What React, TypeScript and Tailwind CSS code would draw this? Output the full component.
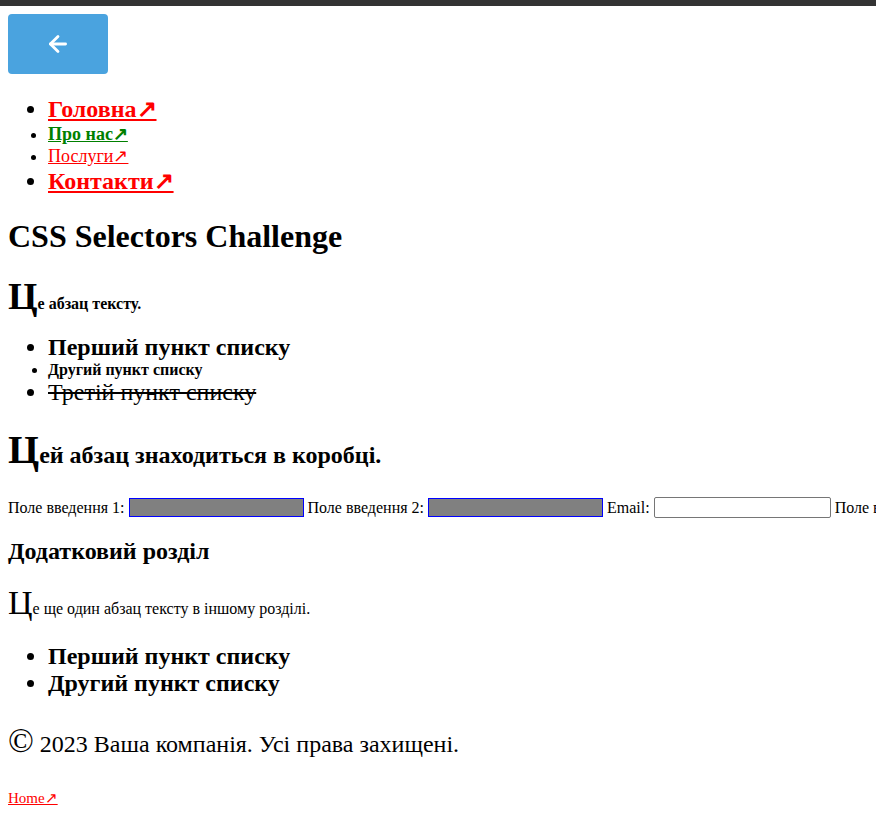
import { ArrowLeft } from "lucide-react";

export default function App() {
  return (
    <div className="min-h-screen bg-white text-black font-['Liberation_Serif','Times_New_Roman',serif] text-[16px] leading-[normal]">
      {/* top strip */}
      <div className="h-[6px] bg-[#333333]" />

      <div className="px-2 pt-2 overflow-hidden">
        <button className="flex h-[60px] w-[100px] items-center justify-center rounded-[4px] bg-[#4aa3df] text-white">
          <ArrowLeft size={26} strokeWidth={2.6} />
        </button>

        <ul className="mt-[21px] mb-[23px] list-disc pl-10 font-bold">
          <li className="text-[24px]">
            <a href="#" className="text-[#ff0000] underline">Головна↗</a>
          </li>
          <li className="text-[18px]">
            <a href="#" className="text-[#008000] underline">Про нас↗</a>
          </li>
          <li className="text-[18px] font-normal">
            <a href="#" className="text-[#ff0000] underline">Послуги↗</a>
          </li>
          <li className="text-[24px]">
            <a href="#" className="text-[#ff0000] underline">Контакти↗</a>
          </li>
        </ul>

        <h1 className="mt-[21.44px] mb-[19px] text-[32px] font-bold">CSS Selectors Challenge</h1>

        <p className="my-4 text-[16px] font-bold first-letter:text-[38px]">Це абзац тексту.</p>

        <ul className="mt-4 mb-[15px] list-disc pl-10 font-bold">
          <li className="text-[24px]">Перший пункт списку</li>
          <li className="text-[16px]">Другий пункт списку</li>
          <li className="text-[24px] font-normal line-through">Третій пункт списку</li>
        </ul>

        <div className="mt-[20px] mb-[24px]">
          <p className="text-[24px] font-bold first-letter:text-[40px]">Цей абзац знаходиться в коробці.</p>
        </div>

        <div className="flex items-center gap-1 whitespace-nowrap">
          <label>Поле введення 1:</label>
          <input type="text" className="h-[19px] w-[175px] shrink-0 border border-[#0000ff] bg-[#808080]" />
          <label>Поле введення 2:</label>
          <input type="text" className="h-[19px] w-[175px] shrink-0 border border-[#0000ff] bg-[#808080]" />
          <label>Email:</label>
          <input type="email" className="h-[21px] w-[177px] shrink-0 rounded-[2px] border border-[#767676] bg-white" />
          <label>Поле введення 3:</label>
          <input type="text" className="h-[19px] w-[175px] shrink-0 border border-[#0000ff] bg-[#808080]" />
        </div>

        <h2 className="mt-[19.5px] mb-[19.5px] text-[24px] font-bold">Додатковий розділ</h2>

        <p className="my-4 text-[16px] first-letter:text-[34px]">Це ще один абзац тексту в іншому розділі.</p>

        <ul className="mt-[21px] mb-4 list-disc pl-10 text-[24px] font-bold">
          <li>Перший пункт списку</li>
          <li>Другий пункт списку</li>
        </ul>

        <footer className="mt-[25px] mb-[29px]">
          <p className="text-[24px] first-letter:text-[34px]">© 2023 Ваша компанія. Усі права захищені.</p>
        </footer>

        <a href="#" className="text-[15px] text-[#ff0000] underline">Home↗</a>
      </div>
    </div>
  );
}
